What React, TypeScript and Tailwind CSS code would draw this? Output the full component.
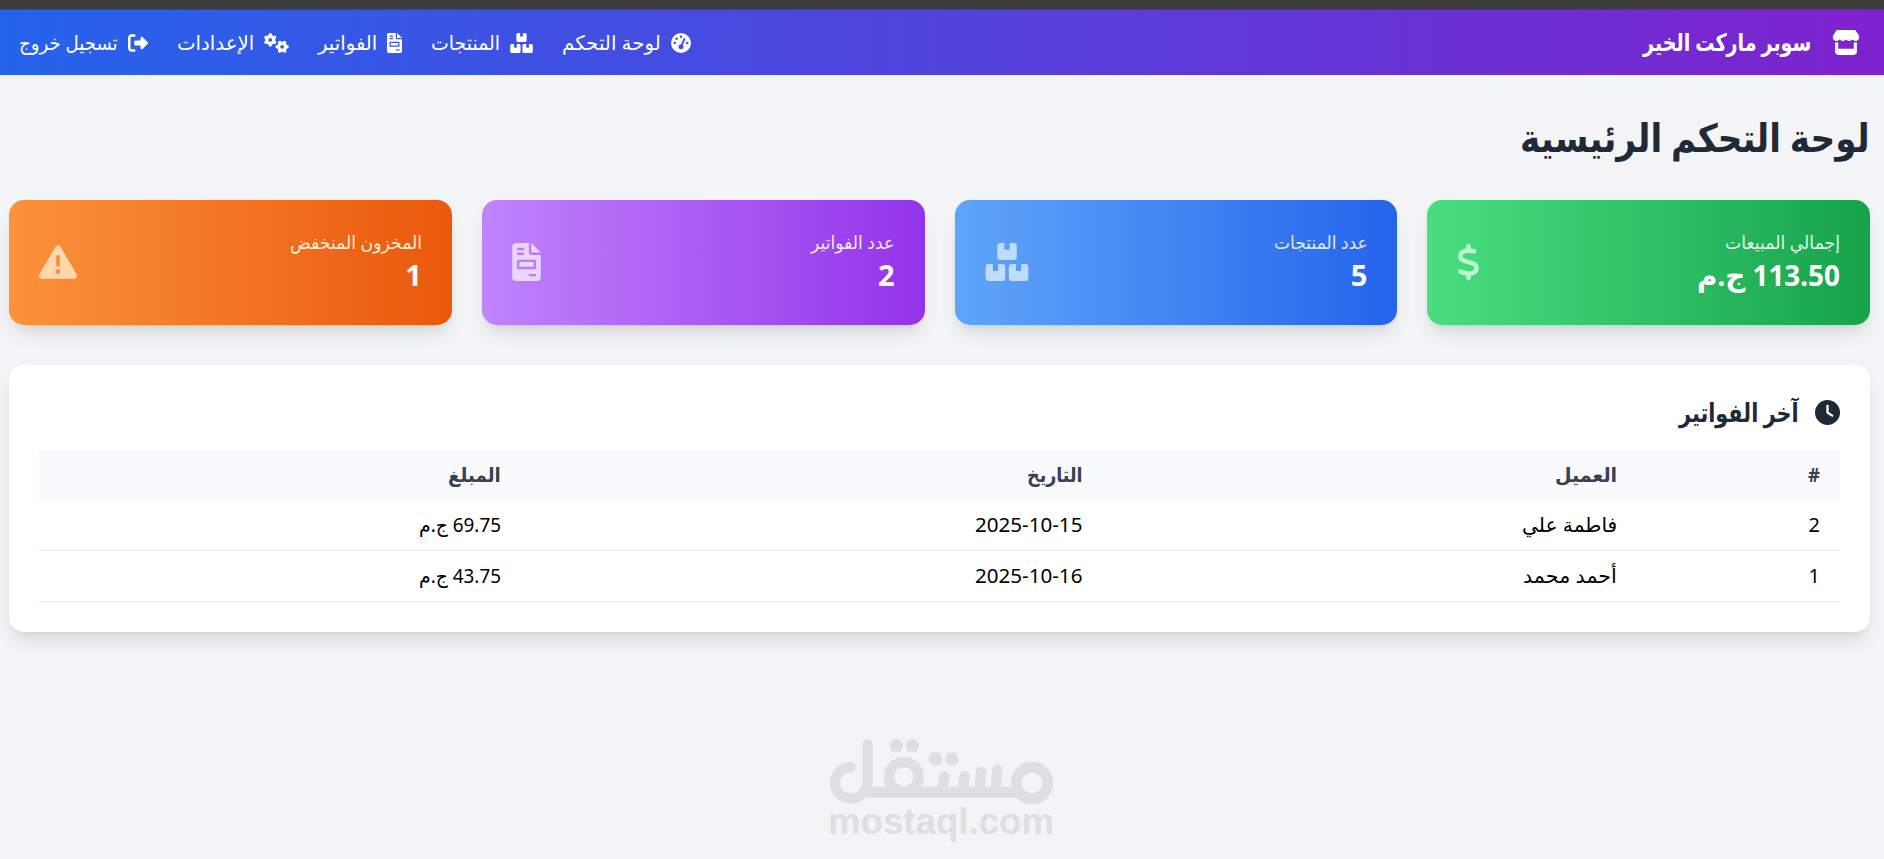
import { useLayoutEffect, useRef, useState } from 'react';
import type { ReactNode } from 'react';
import {
  FaStore, FaGaugeHigh, FaGears, FaRightFromBracket,
  FaDollarSign, FaTriangleExclamation, FaClock,
} from 'react-icons/fa6';

/** Single-line label condensed or widened horizontally to a given width. */
function Fit({ w, className = '', children }: { w: number; className?: string; children: ReactNode }) {
  const ref = useRef<HTMLSpanElement>(null);
  const [scale, setScale] = useState(1);
  useLayoutEffect(() => {
    if (ref.current) setScale(w / ref.current.offsetWidth);
  }, [w]);
  return (
    <span className={`block whitespace-nowrap ${className}`} style={{ width: w }}>
      <span ref={ref} className="inline-block origin-right" style={{ transform: `scaleX(${scale})` }}>
        {children}
      </span>
    </span>
  );
}

function Boxes({ className }: { className?: string }) {
  const box = 'h57v76q0 16 16 16h38q16 0 16-16v-76h57q40 0 40 40v148q0 40-40 40h-184q-40 0-40-40v-148q0-40 40-40z';
  return (
    <svg viewBox="0 0 576 512" fill="currentColor" className={className}>
      <path d={`M196 0${box}M40 284${box}M352 284${box}`} />
    </svg>
  );
}

function Invoice({ className }: { className?: string }) {
  return (
    <svg viewBox="0 0 384 512" fill="currentColor" fillRule="evenodd" className={className}>
      <path d="M256 0v128h128L256 0zM224 128V0H48C21.5 0 0 21.5 0 48v416c0 26.5 21.5 48 48 48h288c26.5 0 48-21.5 48-48V160H256c-17.7 0-32-14.3-32-32zM72 64h80q8 0 8 8v16q0 8-8 8H72q-8 0-8-8V72q0-8 8-8zM72 128h80q8 0 8 8v16q0 8-8 8H72q-8 0-8-8v-16q0-8 8-8zM80 224h224q16 0 16 16v96q0 16-16 16H80q-16 0-16-16v-96q0-16 16-16zM96 256v64h192v-64zM232 416h80q8 0 8 8v16q0 8-8 8h-80q-8 0-8-8v-16q0-8 8-8z" />
    </svg>
  );
}

const nav = [
  { label: 'لوحة التحكم', w: 99, Icon: FaGaugeHigh, size: 'w-[20px]' },
  { label: 'المنتجات', w: 69, Icon: Boxes, size: 'w-[23px]' },
  { label: 'الفواتير', w: 59, Icon: Invoice, size: 'w-[15px]' },
  { label: 'الإعدادات', w: 77, Icon: FaGears, size: 'w-[25px]' },
  { label: 'تسجيل خروج', w: 99, Icon: FaRightFromBracket, size: 'w-[20px]' },
];

const stats = [
  { label: 'إجمالي المبيعات', lw: 115, value: '113.50 ج.م', vw: 143, Icon: FaDollarSign, size: 'w-[23px]',
    bg: 'bg-[linear-gradient(to_left,#16a34a,#4ade80)]', text: 'text-[#dcfce7]', icon: 'text-[#bbf7d0]' },
  { label: 'عدد المنتجات', lw: 94, value: '5', vw: 17, Icon: Boxes, size: 'w-[44px]',
    bg: 'bg-[linear-gradient(to_left,#2563eb,#60a5fa)]', text: 'text-[#dbeafe]', icon: 'text-[#bfdbfe]' },
  { label: 'عدد الفواتير', lw: 83, value: '2', vw: 17, Icon: Invoice, size: 'w-[29px]',
    bg: 'bg-[linear-gradient(to_left,#9333ea,#c084fc)]', text: 'text-[#f3e8ff]', icon: 'text-[#e9d5ff]' },
  { label: 'المخزون المنخفض', lw: 132, value: '1', vw: 17, Icon: FaTriangleExclamation, size: 'w-[38px]',
    bg: 'bg-[linear-gradient(to_left,#ea580c,#fb923c)]', text: 'text-[#ffedd5]', icon: 'text-[#fed7aa]' },
];

const columns = [
  { label: '#', w: 12 },
  { label: 'العميل', w: 62 },
  { label: 'التاريخ', w: 55 },
  { label: 'المبلغ', w: 53 },
];

const rows = [
  [{ label: '2', w: 11 }, { label: 'فاطمة علي', w: 95 }, { label: '2025-10-15', w: 107 }, { label: '69.75 ج.م', w: 82 }],
  [{ label: '1', w: 11 }, { label: 'أحمد محمد', w: 94 }, { label: '2025-10-16', w: 107 }, { label: '43.75 ج.م', w: 82 }],
];

const shadow = 'shadow-[0_12px_19px_-4px_rgba(0,0,0,0.1),0_5px_8px_-5px_rgba(0,0,0,0.1)]';

function Watermark() {
  return (
    <div dir="ltr" className="mx-auto flex w-[226px] flex-col items-center text-[#dedfe1]">
      <svg viewBox="88 55 676 201" className="h-[67px] w-[225px] shrink-0" fill="none" stroke="currentColor" strokeLinecap="round">
        <circle cx="698" cy="190" r="47.5" strokeWidth="33" />
        <circle cx="313" cy="171" r="44.5" strokeWidth="31" />
        <path d="M200 217.5H660" strokeWidth="33" strokeLinecap="butt" />
        <path d="M594 150L588 212M545 157L540 212M496 169L490 212M434 169L428 212" strokeWidth="31" />
        <path d="M153 142A47.5 47.5 0 1 0 190 220Q204 206 204 190V73" strokeWidth="31" />
        <g fill="currentColor" stroke="none">
          <circle cx="290" cy="78" r="20.5" />
          <circle cx="338" cy="78" r="20.5" />
          <circle cx="408" cy="118" r="20.5" />
          <circle cx="457" cy="118" r="20.5" />
        </g>
      </svg>
      <div dir="rtl" className="w-[226px]">
        <Fit w={226} className="font-['Liberation_Sans',sans-serif] text-[36px] leading-[34px] font-bold">mostaql.com</Fit>
      </div>
    </div>
  );
}

export default function App() {
  return (
    <div dir="rtl" className="flex h-[859px] flex-col overflow-hidden bg-[#f3f4f6] font-['Noto_Sans','DejaVu_Sans',sans-serif] text-[20px]">
      <div className="h-[10px] shrink-0 border-b border-[#4a4a4a] bg-[#3c3c3c]" />
      <header className="flex h-[65px] shrink-0 items-center justify-between bg-[linear-gradient(to_left,#7e22ce,#2563eb)] pr-[24px] pl-[19px] text-white">
        <div className="flex items-center gap-[21px]">
          <FaStore className="h-[25px] w-[28px]" />
          <Fit w={168} className="pb-[2px] text-[24px] leading-[40px] font-bold">سوبر ماركت الخير</Fit>
        </div>
        <nav className="flex gap-[29px]">
          {nav.map(({ label, w, Icon, size }) => (
            <a key={label} className="flex items-center gap-[10px]">
              <Icon className={`h-[20px] ${size}`} />
              <Fit w={w} className="text-[20px] leading-[30px]">{label}</Fit>
            </a>
          ))}
        </nav>
      </header>

      <main className="pt-[39px] pr-[14px] pl-[9px]">
        <h1 className="mb-[41px] text-[#1f2937]">
          <Fit w={350} className="text-[39px] leading-[45px] font-bold">لوحة التحكم الرئيسية</Fit>
        </h1>

        <section className="grid grid-cols-4 gap-[30px]">
          {stats.map(({ label, lw, value, vw, Icon, size, bg, text, icon }) => (
            <div key={label} className={`flex h-[125px] items-center justify-between rounded-[15px] px-[30px] ${bg} ${shadow}`}>
              <div>
                <Fit w={lw} className={`text-[18px] leading-[25px] ${text}`}>{label}</Fit>
                <Fit w={vw} className="text-[29px] leading-[40px] font-bold text-white">{value}</Fit>
              </div>
              <Icon className={`mb-[2px] h-[38px] ${size} ${icon}`} />
            </div>
          ))}
        </section>

        <section className={`mt-[40px] h-[267px] rounded-[15px] bg-white p-[30px] ${shadow}`}>
          <h2 className="mb-[20px] flex h-[35px] items-center gap-[16px] text-[#1f2937]">
            <FaClock className="size-[25px]" />
            <Fit w={120} className="text-[26px] leading-[35px] font-bold">آخر الفواتير</Fit>
          </h2>
          <table className="w-full table-fixed border-separate border-spacing-0">
            <colgroup>
              <col className="w-[203px]" />
              <col className="w-[535px]" />
              <col className="w-[581px]" />
              <col />
            </colgroup>
            <thead>
              <tr className="h-[50px] bg-[#f9fafb] text-[#374151]">
                {columns.map((c) => (
                  <th key={c.label} className="px-[20px] py-0 text-right">
                    <Fit w={c.w} className="text-[20px] leading-[30px] font-bold">{c.label}</Fit>
                  </th>
                ))}
              </tr>
            </thead>
            <tbody>
              {rows.map((r) => (
                <tr key={r[0].label} className="h-[51px] text-black">
                  {r.map((c) => (
                    <td key={c.label} className="border-b border-[#e5e7eb] px-[20px] py-0">
                      <Fit w={c.w} className="text-[20px] leading-[30px]">{c.label}</Fit>
                    </td>
                  ))}
                </tr>
              ))}
            </tbody>
          </table>
        </section>

        <div className="mt-[106px] -mr-[4px]">
          <Watermark />
        </div>
      </main>
    </div>
  );
}
